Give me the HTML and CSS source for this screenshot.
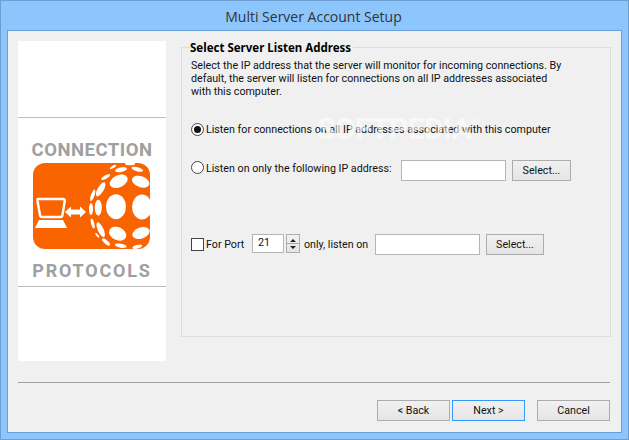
FILE: index.html
```html
<!DOCTYPE html>
<html lang="en">
<head>
<meta charset="utf-8">
<title>Multi Server Account Setup</title>
<link rel="stylesheet" href="styles.css">
</head>
<body>
<div class="window">
  <div class="titlebar">Multi Server Account Setup</div>
  <div class="client">
    <div class="top">
      <aside class="panel">
        <div class="logo-block">
          <div class="logo-word connection">CONNECTION</div>
          <svg class="logo" width="117" height="86" viewBox="0 0 117 86" aria-hidden="true">
            <defs><clipPath id="r"><rect width="117" height="86" rx="12"/></clipPath></defs>
            <g clip-path="url(#r)">
              <rect width="117" height="86" fill="#f96400"/>
              <g fill="#fff">
                <ellipse cx="83" cy="43.7" rx="10" ry="12.5"/>
                <ellipse cx="109" cy="44" rx="10" ry="12.5"/>
                <ellipse cx="85.7" cy="18.3" rx="9.5" ry="6" transform="rotate(-25 85.7 18.3)"/>
                <ellipse cx="107.7" cy="18.7" rx="9" ry="5.5" transform="rotate(20 107.7 18.7)"/>
                <ellipse cx="84.7" cy="70.7" rx="9" ry="6.5" transform="rotate(25 84.7 70.7)"/>
                <ellipse cx="108" cy="70" rx="9" ry="5.5" transform="rotate(-20 108 70)"/>
                <ellipse cx="65.3" cy="44.7" rx="3.5" ry="8"/>
                <ellipse cx="58" cy="46" rx="2" ry="6"/>
                <ellipse cx="67.7" cy="26.3" rx="3" ry="8" transform="rotate(30 67.7 26.3)"/>
                <ellipse cx="59.7" cy="32.3" rx="1.8" ry="6" transform="rotate(20 59.7 32.3)"/>
                <ellipse cx="72.7" cy="14" rx="5" ry="1.8" transform="rotate(-30 72.7 14)"/>
                <ellipse cx="88" cy="6.7" rx="6" ry="2.3" transform="rotate(-10 88 6.7)"/>
                <ellipse cx="104.3" cy="6.3" rx="6" ry="2" transform="rotate(15 104.3 6.3)"/>
                <ellipse cx="80" cy="4" rx="3.5" ry="1.2" transform="rotate(-30 80 4)"/>
                <ellipse cx="97" cy=".7" rx="5" ry="1.5"/>
                <ellipse cx="67.7" cy="66.7" rx="2.8" ry="8" transform="rotate(-25 67.7 66.7)"/>
                <ellipse cx="59.7" cy="60.7" rx="1.6" ry="5" transform="rotate(-15 59.7 60.7)"/>
                <ellipse cx="73" cy="79" rx="5" ry="1.8" transform="rotate(40 73 79)"/>
                <ellipse cx="64.3" cy="72.3" rx="3" ry="1" transform="rotate(50 64.3 72.3)"/>
                <ellipse cx="87.7" cy="82.7" rx="6" ry="2" transform="rotate(10 87.7 82.7)"/>
                <ellipse cx="104.3" cy="83.7" rx="5" ry="1.8" transform="rotate(-15 104.3 83.7)"/>
                <path d="M2 65 L6 57 H30 L34 65 Z"/>
                <path d="M32 49 L38 43.500 V46.500 H47 V43.500 L53 49 L47 54.500 V51.500 H38 V54.500 Z"/>
              </g>
              <path d="M5 36 H30 Q32 36 31.700 38 L29.500 52 Q29.200 54 27.500 54 H9 Q7.300 54 7 52 L4.500 38 Q4.200 36 5 36 Z" fill="none" stroke="#fff" stroke-width="2.4"/>
            </g>
          </svg>
          <div class="logo-word protocols">PROTOCOLS</div>
        </div>
      </aside>
      <section class="group">
        <h2 class="group-title">Select Server Listen Address</h2>
        <p class="desc">Select the IP address that the server will monitor for incoming connections. By default, the server will listen for connections on all IP addresses associated with this computer.</p>
        <div class="row row-all">
          <span class="radio checked"></span>
          <span class="label">Listen for connections on all IP addresses associated with this computer</span>
        </div>
        <div class="row row-only">
          <span class="radio"></span>
          <span class="label only-label">Listen on only the following IP address:</span>
          <span class="field field-ip"></span>
          <button class="btn btn-select-a" type="button">Select...</button>
        </div>
        <div class="row row-port">
          <span class="check"></span>
          <span class="label for-port">For Port</span>
          <span class="field field-port">21</span>
          <span class="spin">
            <svg width="14" height="19" viewBox="0 0 14 19" aria-hidden="true">
              <path d="M7 5 L10 8 H4 Z M4 12 H10 L7 15 Z" fill="#222"/>
              <path d="M1 9.500 H13" stroke="#aaa"/>
            </svg>
          </span>
          <span class="label only-listen">only, listen on</span>
          <span class="field field-listen"></span>
          <button class="btn btn-select-b" type="button">Select...</button>
        </div>
      </section>
    </div>
    <div class="separator"></div>
    <div class="actions">
      <button class="btn btn-nav" type="button">&lt; Back</button>
      <button class="btn btn-nav btn-default" type="button">Next &gt;</button>
      <button class="btn btn-nav btn-cancel" type="button">Cancel</button>
    </div>
    <div class="watermark">SOFTPEDIA<sup>®</sup></div>
  </div>
</div>
</body>
</html>
```
FILE: styles.css
```css
* { box-sizing: border-box; }
html, body { margin: 0; padding: 0; }
body { width: 629px; height: 440px; overflow: hidden; font-family: Roboto, sans-serif; font-size: 10.7px; color: #111; }
.window { width: 629px; height: 440px; background: #8cc6fc; border: 1px solid #6d9fd2; padding: 0 6px 6px; display: flex; flex-direction: column; }
.titlebar { height: 29px; flex: none; display: flex; align-items: center; justify-content: center; font-family: "Open Sans", sans-serif; font-size: 14px; color: #333; padding: 1px 2px 0 0; }
.client { position: relative; flex: 1; background: #f0f0f0; border: 1px solid #6d9fd2; padding: 10px 10px 0; min-height: 0; }
.top { display: flex; gap: 15px; align-items: flex-start; }
.panel { width: 148px; height: 320px; flex: none; background: #fff; padding-top: 76px; }
.logo-block { height: 170px; border-top: 1px solid #bcbcbc; border-bottom: 1px solid #bcbcbc; display: flex; flex-direction: column; align-items: center; }
.logo-word { font-family: Roboto, sans-serif; font-weight: 700; color: #a0a0a0; white-space: nowrap; line-height: 16px; }
.connection { font-size: 18.5px; letter-spacing: .5px; margin-top: 24px; }
.logo { display: block; margin: 5px 1px 14px 0; }
.protocols { font-size: 18px; letter-spacing: 1.8px; }
.group { flex: 1; margin-top: 6px; height: 290px; border: 1px solid #dcdcdc; padding: 0 8px; }
.group-title { margin: -7px 0 0; width: fit-content; padding-right: 2px; height: 14px; line-height: 14px; font-family: "Noto Sans", sans-serif; font-size: 11.5px; font-weight: 700; color: #000; background: #f0f0f0; }
.desc { margin: 4px 0 0 1px; line-height: 13px; width: 376px; }
.row { display: flex; align-items: center; white-space: nowrap; }
.row-all { margin: 25px 0 0 1px; height: 13px; }
.row-only { margin: 24px 0 0 1px; height: 21px; align-items: flex-start; }
.row-only .radio { margin-top: 1px; }
.row-only .label { line-height: 13px; margin-top: 2px; }
.row-port { margin: 53px 0 0 1px; height: 21px; }
.radio { width: 13px; height: 13px; flex: none; border: 1px solid #444; border-radius: 50%; background: #fff; display: flex; align-items: center; justify-content: center; }
.radio.checked::after { content: ""; width: 7px; height: 7px; border-radius: 50%; background: #111; }
.check { width: 13px; height: 13px; flex: none; border: 1px solid #444; background: #fff; }
.label { margin-left: 2px; }
.only-label { width: 195px; }
.field { height: 21px; border: 1px solid #b5b5b5; background: #fff; flex: none; }
.field-ip { width: 105px; }
.field-listen { width: 105px; }
.field-port { width: 32px; height: 19px; margin-left: 8px; padding-left: 5px; line-height: 16px; align-self: flex-start; }
.for-port { width: 38px; }
.spin { width: 14px; height: 19px; margin-left: 2px; flex: none; align-self: flex-start; border: 1px solid #adadad; background: linear-gradient(#f2f2f2, #e4e4e4); display: flex; align-items: center; justify-content: center; overflow: hidden; }
.spin svg { flex: none; }
.only-listen { margin-left: 4px; width: 71px; }
.btn { height: 21px; flex: none; padding: 0; border: 1px solid #acacac; background: linear-gradient(#f1f1f1, #e5e5e5); font: inherit; color: #111; }
.btn-select-a { width: 59px; margin-left: 6px; }
.btn-select-b { width: 58px; margin-left: 6px; }
.separator { height: 1px; background: #a0a0a0; margin: 21px 1px 0 0; }
.actions { display: flex; justify-content: flex-end; margin: 17px 1px 0 0; }
.btn-nav { width: 73px; margin-left: 2px; }
.btn-default { border-color: #3399ff; }
.btn-cancel { margin-left: 12px; }
.watermark { position: absolute; left: 309px; top: 80px; font-family: Roboto, sans-serif; font-weight: 700; font-size: 30px; letter-spacing: -.6px; color: rgba(255, 255, 255, .6); pointer-events: none; white-space: nowrap; }
.watermark sup { font-size: 10px; font-weight: 400; vertical-align: 14px; line-height: 0; }
```
